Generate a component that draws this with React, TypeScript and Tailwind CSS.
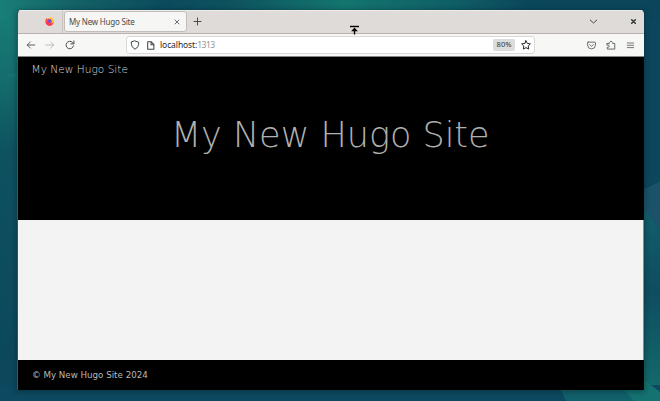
import type { ReactNode } from 'react';

function Wallpaper() {
  return (
    <svg className="absolute inset-0 h-full w-full" viewBox="0 0 660 401" preserveAspectRatio="none">
      <defs>
        <linearGradient id="left" x1="0" y1="0" x2="0" y2="1">
          <stop offset="0" stopColor="#197f78" />
          <stop offset=".2" stopColor="#146c6c" />
          <stop offset=".38" stopColor="#0e515f" />
          <stop offset="1" stopColor="#0c465c" />
        </linearGradient>
        <linearGradient id="top" x1="0" y1="0" x2="1" y2="0">
          <stop offset="0" stopColor="#197f78" />
          <stop offset=".1" stopColor="#146467" />
          <stop offset=".25" stopColor="#0b4a5d" />
          <stop offset=".34" stopColor="#0d515e" />
          <stop offset=".52" stopColor="#13756e" />
          <stop offset=".68" stopColor="#0f5f66" />
          <stop offset=".8" stopColor="#0b475b" />
          <stop offset="1" stopColor="#0b455b" />
        </linearGradient>
        <linearGradient id="right" x1="0" y1="0" x2="0" y2="1">
          <stop offset="0" stopColor="#14646d" />
          <stop offset=".5" stopColor="#0e4d60" />
          <stop offset="1" stopColor="#146d6c" />
        </linearGradient>
      </defs>
      <rect width="660" height="401" fill="#0c465c" />
      <rect width="40" height="401" fill="url(#left)" />
      <rect width="660" height="20" fill="url(#top)" />
      <path d="M4 75 20 73V79Z" fill="#16756f" />
      <path d="M630 196 660 182V401H630Z" fill="url(#right)" />
      <path d="M660 182V231L644 207V190Z" fill="#1a5369" />
      <path d="M0 385H660V401H0Z" fill="#0d4960" />
      <path d="M560 388H622L638 401H566Z" fill="#11616a" />
      <path d="M622 388 644 380 660 392V401H634Z" fill="#147270" />
    </svg>
  );
}

function Icon({ children, className = '', size = 10, box = 16, width = 1.4 }: { children: ReactNode; className?: string; size?: number; box?: number; width?: number }) {
  return (
    <svg width={size} height={size} viewBox={`0 0 ${box} ${box}`} fill="none" stroke="currentColor" strokeWidth={width} strokeLinecap="round" strokeLinejoin="round" className={`shrink-0 ${className}`}>
      {children}
    </svg>
  );
}

function Firefox() {
  return (
    <svg width="9" height="9" viewBox="0 0 18 18" className="shrink-0">
      <path d="M1 5 3 2l2 2 4-2 5 0 3 5v5l-3 4-5 2-5-2-3-4Z" fill="#ff5a36" />
      <path d="M9 0c5 0 9 5 8 10-1 4-3 6-5 6l2-6-3-5-4-1Z" fill="#ffc928" />
      <circle cx="9.2" cy="8" r="4" fill="#8248d8" />
      <path d="M1 8c2 0 3 2 6 2-1 3 3 5 6 3l4-2c-2 9-15 9-16-3Z" fill="#fa3556" />
    </svg>
  );
}

function TabStrip() {
  return (
    <div className="flex h-6 shrink-0 items-center border-b border-[#b9b0b0] bg-[#dfdbd8] pr-[6px] text-[#454b4c] shadow-[inset_0_1px_0_#eeebe9]">
      <div className="flex h-full w-[45px] items-center border-r border-[#cbc5c3] pl-[27px]">
        <Firefox />
      </div>
      <div className="ml-px flex h-[21px] w-[123px] items-center rounded-[3px] border border-[#c2bdba] bg-[#f6f6f4] pr-[6px] pl-[4px]">
        <span className="flex-1 whitespace-nowrap text-[8px] leading-none tracking-[-0.2px]">My New Hugo Site</span>
        <Icon size={6} box={6} width={0.8}><path d="m1 1 4 4m0-4L1 5" /></Icon>
      </div>
      <Icon size={9} box={9} width={1} className="ml-[6px]"><path d="M4.5 1v7M1 4.5h7" /></Icon>
      <Icon size={9} box={9} width={1} className="ml-auto"><path d="m1.2 3 3.3 3 3.3-3" /></Icon>
      <Icon size={7} box={7} width={1.5} className="mr-px ml-[32px] text-[#2e3436]"><path d="m1.7 1.7 3.600 3.600m0-3.600-3.600 3.600" /></Icon>
    </div>
  );
}

function Toolbar() {
  return (
    <div className="flex h-[23px] shrink-0 items-center border-b border-[#85857f] bg-[#f7f7f5] text-[#4b5152]">
      <Icon className="ml-[8px]"><path d="M14 8H2m5-5L2 8l5 5" /></Icon>
      <Icon className="ml-[9px] text-[#b6b8b7]"><path d="M1 8h13M9 3l5 5-5 5" /></Icon>
      <Icon className="ml-[10px]" width={1.6}><path d="M13.6 9.5A6 6 0 1 1 12 3.8l2 2M14.2 1.5v4.7H9.5" /></Icon>
      <div className="ml-[51px] flex h-[18px] w-[409px] items-center rounded-[3px] border border-[#ddd7d7] bg-white pr-[3px] pl-[3px]">
        <Icon width={1.6} className="text-[#3e4446]"><path d="m8 1.5 6 2.2c0 5-1.5 8.8-6 11-4.500-2.200-6-6-6-11Z" /></Icon>
        <Icon width={1.8} size={9} className="ml-[6px] text-[#3e4446]"><path d="M3 1.500h6.500L14 6v8.500H3ZM9 2v4.500h5" /></Icon>
        <span className="ml-[5px] whitespace-nowrap text-[8.500px] leading-none tracking-[-0.500px] text-[#939697]"><span className="tracking-[-0.100px] text-[#25292b]">localhost:</span>1313</span>
        <span className="ml-auto flex h-[12px] w-[22px] items-center justify-center rounded-[2px] bg-[#dcdcdc] text-[7.500px] leading-none text-[#303638]">80%</span>
        <Icon width={1.6} className="ml-[6px] text-[#25292b]"><path d="m8 1.200 2.100 4.300 4.900.7-3.500 3.400.8 4.900L8 12.200l-4.300 2.300.8-4.900L1 6.200l4.900-.7Z" /></Icon>
      </div>
      <Icon size={9} className="ml-[52px] text-[#656b6c]" width={1.7}><path d="M2 2h12a1 1 0 0 1 1 1v4a7 7 0 0 1-14 0V3a1 1 0 0 1 1-1ZM4.800 6.500 8 9.400l3.200-2.900" /></Icon>
      <Icon size={10} className="ml-[10px] text-[#656b6c]" width={1.6}><path d="M2 5.500h3.500V4L8 1.500 10.500 4v1.500H14v9H2v-3h1.500a1.700 1.700 0 0 0 0-3.400H2Z" /></Icon>
      <Icon size={9} box={9} className="ml-[10px] text-[#656b6c]" width={0.9}><path d="M1.300 2h6.400m-6.400 2.300h6.400m-6.400 2.300h6.400" /></Icon>
    </div>
  );
}

function Pointer() {
  return (
    <svg className="absolute top-[25px] left-[349px]" width="11" height="11" viewBox="0 0 11 11">
      <path d="M1 1.500h9M5.500 10V3M2.500 6l3-3 3 3" fill="none" stroke="#fff" strokeOpacity=".6" strokeWidth="2.200" />
      <path d="M1 1.500h9M5.500 9.500V4" fill="none" stroke="#000" strokeWidth="1.500" />
      <path d="M5.500 2.500 9 6.300H2Z" />
    </svg>
  );
}

export default function App() {
  return (
    <div className="relative h-[401px] w-[660px] overflow-hidden">
      <Wallpaper />
      <div className="relative px-[17px] pt-[10px]">
        <div className="flex h-[380px] w-[627px] flex-col overflow-hidden rounded-t-[4px] border-l border-[#345a5d] bg-black font-['Noto_Sans',sans-serif] shadow-[0_1px_5px_1px_rgba(0,20,28,0.35)]">
          <TabStrip />
          <Toolbar />
          <div className="flex min-h-0 flex-1 flex-col font-['DejaVu_Sans',sans-serif]">
            <header className="h-[163px] bg-black text-[#b0b0b0]">
              <nav className="flex h-[25px] items-center pl-[13.500px]">
                <a className="whitespace-nowrap text-[10.600px] leading-none font-extralight text-[#dddddd]">My New Hugo Site</a>
              </nav>
              <h1 className="flex h-[107px] items-center justify-center pr-[1.500px] whitespace-nowrap text-[35px] leading-none font-extralight">My New Hugo Site</h1>
            </header>
            <main className="flex-1 border-r border-[#789394] bg-[#f3f3f3]" />
            <footer className="flex h-[30px] items-center bg-black pt-px pl-[14px] text-[8.700px] leading-none text-[#b8b8b8]">© My New Hugo Site 2024</footer>
          </div>
        </div>
      </div>
      <Pointer />
    </div>
  );
}
